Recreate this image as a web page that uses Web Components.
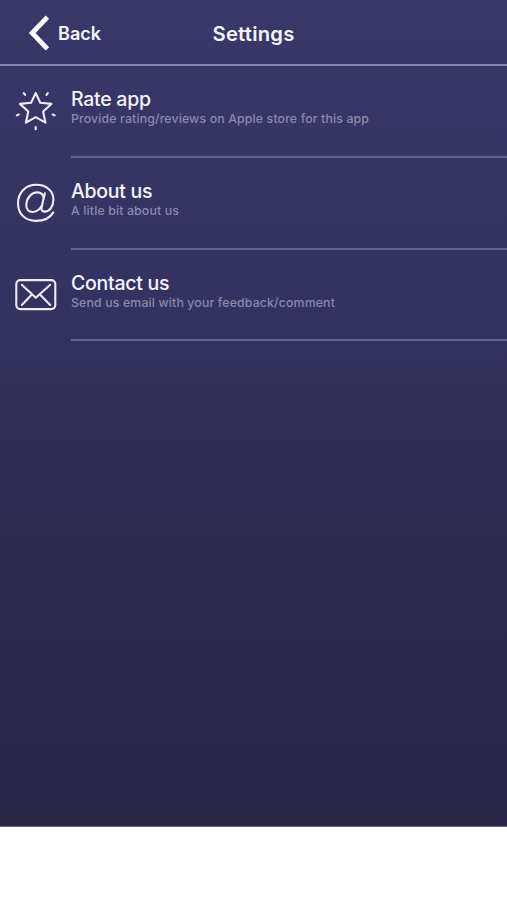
<!DOCTYPE html>
<html lang="en">
<head>
<meta charset="utf-8">
<title>Settings</title>
<style>
html, body { margin: 0; background: #fff; }
body { font-family: Inter, "Liberation Sans", sans-serif; color: #f5f4fe; }
</style>
</head>
<body>
<settings-screen>
  <nav-header back="Back">Settings</nav-header>
  <settings-row>
    <svg slot="icon" width="42" height="44" viewBox="0 0 42 44" fill="none" stroke="#eeedfc" stroke-width="2.1" stroke-linejoin="round" stroke-linecap="round"><path d="M20.7 5 L25.3 14.7 L36.4 15.9 L28.1 23.5 L30.5 34.7 L20.7 29.2 L10.9 34.7 L13.3 23.5 L4.9 15.9 L16.1 14.7Z"/><path d="M8.8 5.1l1.3 1.8M32.8 5.1l-1.3 1.8M1.8 27.4l1.9-.9M39.6 27.4l-1.9-.9M20.7 39v2.2"/></svg>
    Rate app
    <span slot="note">Provide rating/reviews on Apple store for this app</span>
  </settings-row>
  <settings-row>
    <svg slot="icon" width="42" height="44" viewBox="0 -1.6 42 44" fill="none" stroke="#eeedfc" stroke-width="2.1" stroke-linecap="round" stroke-linejoin="round"><path d="M38.3 30.8 C35 36.5 28.5 39.3 21 39.3 C10 39.3 3 32.2 3 21.8 C3 10.8 10.8 3.2 21.3 3.2 C31.6 3.2 38.4 9.4 38.4 18 C38.4 25.1 34.3 30 29.7 30 C27 30 26 28.3 26.7 25.1 L29.9 11.6"/><path d="M28.7 16.3 C28 12.7 25.7 10.8 22.5 10.8 C16.3 10.8 11.3 16.7 11.3 23.4 C11.3 27.7 13.7 30.4 17.4 30.4 C21.4 30.4 24.9 27.5 26.7 24.4"/></svg>
    About us
    <span slot="note">A litle bit about us</span>
  </settings-row>
  <settings-row>
    <svg slot="icon" width="42" height="44" viewBox="0 -1.8 42 44" fill="none" stroke="#eeedfc" stroke-width="2.1" stroke-linecap="round" stroke-linejoin="round"><rect x="1.3" y="6.3" width="39" height="29" rx="4"/><path d="M6.8 11 L20.8 24 L35.2 11M6.8 31.2 L16.6 20.9M35.2 31.2 L25.2 20.9"/></svg>
    Contact us
    <span slot="note">Send us email with your feedback/comment</span>
  </settings-row>
</settings-screen>

<template id="screen-template">
  <style>
    :host { display: block; box-sizing: border-box; height: 827px; border-bottom: 1px solid #6f6b86;
      background: linear-gradient(#3a3869 0, #383666 70px, #343260 290px, #2f2d56 450px, #2b2748 800px, #2a2646 100%); }
  </style>
  <slot></slot>
</template>

<template id="header-template">
  <style>
    :host { display: grid; grid-template-columns: 1fr auto 1fr; align-items: center; box-sizing: border-box;
      height: 66px; border-bottom: 2px solid #8785ab; font-weight: 600; }
    .back { display: flex; align-items: center; gap: 8px; padding-left: 28px; padding-top: 2px; font-size: 18px; letter-spacing: .05px; }
    h1 { margin: 0; padding-top: 2px; font-size: 20.3px; font-weight: 600; letter-spacing: .2px; }
    svg { display: block; }
  </style>
  <div class="back"><svg width="22" height="36" viewBox="0 0 22 36" fill="none" stroke="#fff" stroke-width="4.8"><path d="M19.4 2.2 L4.2 18 L19.4 33.8"/></svg><span></span></div>
  <h1><slot></slot></h1>
</template>

<template id="row-template">
  <style>
    :host { display: grid; grid-template-columns: 71px 1fr; height: 91.8px; }
    .icon { padding: 22px 0 0 15px; }
    .body { box-sizing: border-box; padding-top: 21.3px; border-bottom: 2px solid #66638f; }
    .title { font-size: 19.5px; line-height: 24px; font-weight: 500; letter-spacing: -.27px; }
    .note { font-size: 12.3px; line-height: 15px; font-weight: 500; color: #8c89af; letter-spacing: .15px; }
  </style>
  <div class="icon"><slot name="icon"></slot></div>
  <div class="body"><div class="title"><slot></slot></div><div class="note"><slot name="note"></slot></div></div>
</template>

<script>
class TemplateElement extends HTMLElement {
  constructor() {
    super();
    this.attachShadow({ mode: "open" })
      .append(document.getElementById(this.constructor.template).content.cloneNode(true));
  }
}
class SettingsScreen extends TemplateElement { static template = "screen-template"; }
class SettingsRow extends TemplateElement { static template = "row-template"; }
class NavHeader extends TemplateElement {
  static template = "header-template";
  connectedCallback() {
    this.shadowRoot.querySelector(".back span").textContent = this.getAttribute("back");
  }
}
customElements.define("settings-screen", SettingsScreen);
customElements.define("nav-header", NavHeader);
customElements.define("settings-row", SettingsRow);
</script>
</body>
</html>
